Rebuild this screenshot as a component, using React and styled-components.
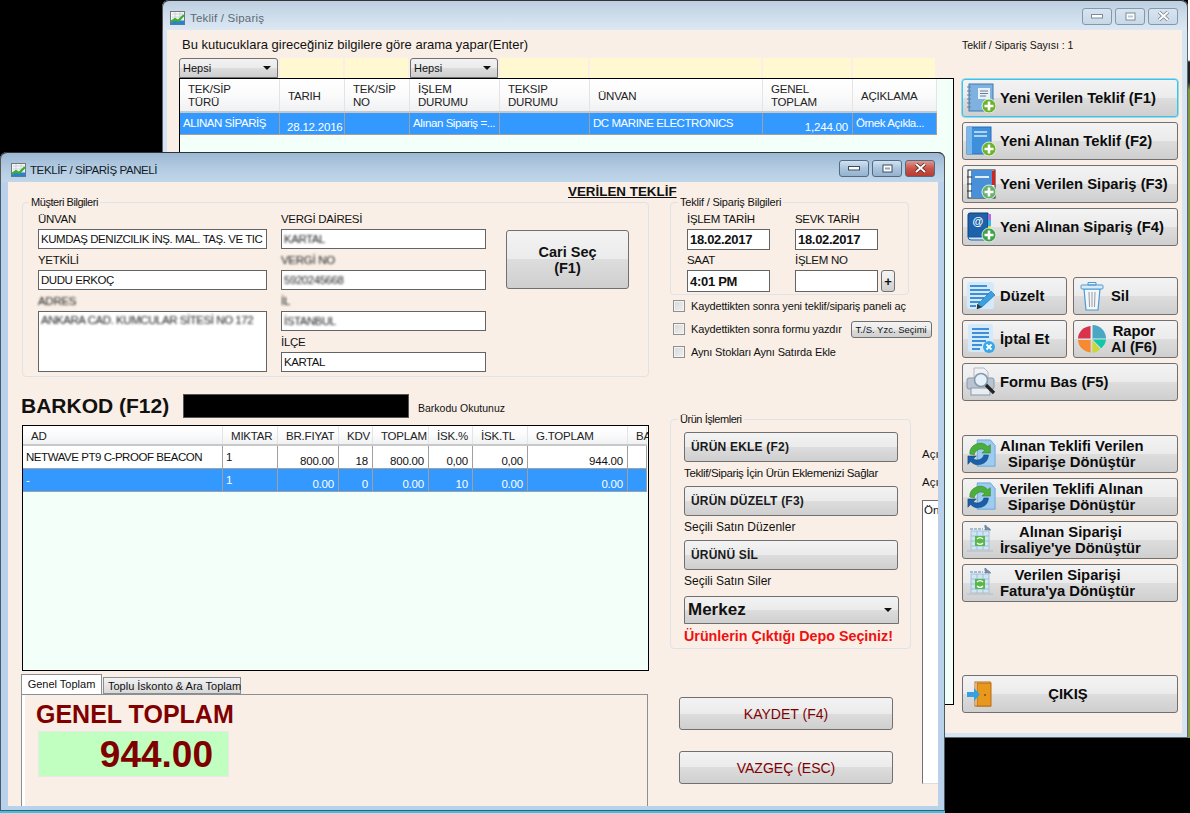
import React from 'react';
import styled, { createGlobalStyle } from 'styled-components';

const GlobalStyle = createGlobalStyle`
  html, body {
    margin: 0;
    padding: 0;
    background: #000;
  }
  * {
    box-sizing: border-box;
  }
`;

const BEIGE = '#f9efe6';
const MINT = '#f3fff9';
const SELECT = '#3399ff';
const MAROON = '#800000';

const Desktop = styled.div`
  position: relative;
  width: 1190px;
  height: 813px;
  overflow: hidden;
  background: #000;
  font-family: "Liberation Sans", Arial, sans-serif;
  font-size: 12px;
  color: #111;
`;

const EdgeStrip = styled.div`
  position: absolute;
  right: 0;
  top: 0;
  width: 2px;
  height: 738px;
  background: linear-gradient(#fff 0, #fff 60px, #222 62px, #222 82px, #7c9a3a 90px, #7c9a3a 100%);
`;

const Window = styled.div`
  position: absolute;
  left: ${(p) => p.$left}px;
  top: ${(p) => p.$top}px;
  width: ${(p) => p.$width}px;
  height: ${(p) => p.$height}px;
  display: flex;
  flex-direction: column;
  border-radius: 7px 7px 0 0;
  padding: 0 ${(p) => (p.$active ? 7 : 6)}px 5px ${(p) => (p.$active ? 8 : 5)}px;
  background: ${(p) => (p.$active ? '#b9d1ea' : '#d7e4f2')};
  box-shadow: inset 0 0 0 1px ${(p) => (p.$active ? '#4a5a66' : '#5a6670')};
  border-bottom: ${(p) => (p.$active ? '2px solid #2cc6e6' : '0')};
`;

const TitleBar = styled.div`
  flex: none;
  height: 30px;
  margin: 0 ${(p) => (p.$active ? -7 : -6)}px 0 ${(p) => (p.$active ? -8 : -5)}px;
  padding: ${(p) => (p.$active ? '5px 9px 0 10px' : '5px 9px 0 7px')};
  display: flex;
  align-items: center;
  gap: ${(p) => (p.$active ? 4 : 5)}px;
  border-radius: 7px 7px 0 0;
  border-top: 1px solid #333;
  border-left: 1px solid #555;
  border-right: 1px solid #555;
  background: ${(p) =>
    p.$active
      ? 'linear-gradient(#9cb8d4, #b4cce2 55%, #c0d6ea)'
      : 'linear-gradient(#bccfe0, #cfdeec 55%, #dce8f3)'};
  color: ${(p) => (p.$active ? '#101c28' : '#5d6b76')};
  font-size: 11.5px;
  letter-spacing: ${(p) => (p.$active ? -0.4 : 0.2)}px;
`;

const TitleText = styled.span`
  flex: 1;
`;

const WinControls = styled.div`
  display: flex;
  gap: 3px;
  margin-top: -4px;
`;

const WinBtn = styled.div`
  width: 30px;
  height: 17px;
  display: flex;
  align-items: center;
  justify-content: center;
  border: 1px solid ${(p) => (p.$active ? '#4f6b86' : '#8298ad')};
  border-radius: 3px;
  background: ${(p) =>
    p.$close && p.$active
      ? 'linear-gradient(#e0988c, #c9544a 50%, #b93a30)'
      : p.$active
      ? 'linear-gradient(#d3e2f0, #aac4dc 50%, #94b2cf)'
      : 'linear-gradient(#d8e4ef, #c8d8e8)'};
`;

const Client = styled.div`
  flex: 1;
  min-height: 0;
  position: relative;
  display: flex;
  overflow: hidden;
  background: ${BEIGE};
`;

/* back window */

const BackMain = styled.div`
  flex: none;
  width: 775px;
  margin-left: 12px;
  display: flex;
  flex-direction: column;
  padding-top: 7px;
`;

const HintText = styled.div`
  height: 21px;
  line-height: 15px;
  padding-left: 3px;
  font-size: 13px;
  color: #111;
`;

const FilterRow = styled.div`
  display: flex;
  gap: 2px;
  height: 20px;
`;

const FilterCell = styled.div`
  width: ${(p) => p.$w}px;
  background: #fff8d0;
`;

const Combo = styled.div`
  width: ${(p) => p.$w}px;
  height: ${(p) => p.$h || 20}px;
  margin-top: ${(p) => (p.$big ? 2 : 0)}px;
  display: flex;
  align-items: center;
  justify-content: space-between;
  padding: 0 6px 0 3px;
  border: 1px solid #707070;
  border-radius: 3px 3px 0 0;
  background: linear-gradient(#f2f2f2 0, #ebebeb 50%, #dddddd 50%, #cfcfcf 100%);
  font-size: ${(p) => (p.$big ? 17 : 11)}px;
  font-weight: ${(p) => (p.$big ? 700 : 400)};
  &::after {
    content: '';
    border-left: 4px solid transparent;
    border-right: 4px solid transparent;
    border-top: 4px solid #111;
  }
`;

const DataGrid = styled.div`
  height: ${(p) => p.$h}px;
  border: 1.5px solid #000;
  background: ${MINT};
  overflow: hidden;
`;

const GridRow = styled.div`
  display: grid;
  grid-template-columns: ${(p) => p.$cols};
  height: ${(p) => p.$h}px;
  width: max-content;
  background: ${(p) => (p.$selected ? SELECT : '#fff')};
  color: ${(p) => (p.$selected ? '#fff' : '#111')};
  border-bottom: 1px solid #a0a0a0;
`;

const HeaderRow = styled(GridRow)`
  background: linear-gradient(#fff 0, #fbfbfc 50%, #f0f1f2 100%);
  color: #222;
  border-bottom: 2px solid #c8c8c8;
`;

const HeadCell = styled.div`
  display: flex;
  align-items: center;
  padding: 2px 0 0 8px;
  line-height: 13px;
  font-size: 11.5px;
  letter-spacing: -0.2px;
  white-space: pre-line;
  border-right: 1px solid #e2e4e6;
`;

const Cell = styled.div`
  display: flex;
  align-items: ${(p) => (p.$low ? 'flex-end' : 'center')};
  justify-content: ${(p) => (p.$right ? 'flex-end' : 'flex-start')};
  padding: ${(p) => (p.$low ? '0 4px 1px 4px' : '0 4px 1px 3px')};
  font-size: 11.5px;
  letter-spacing: ${(p) => (p.$low ? -0.2 : -0.45)}px;
  white-space: nowrap;
  overflow: hidden;
  border-right: 1px solid #a0a0a0;
`;

const BackSide = styled.div`
  flex: none;
  width: 216px;
  margin-left: 8px;
  display: flex;
  flex-direction: column;
`;

const CountText = styled.div`
  height: 49px;
  padding-top: 9px;
  font-size: 10.5px;
`;

const Stack = styled.div`
  display: flex;
  flex-direction: column;
  gap: 5px;
  margin-top: ${(p) => p.$top || 0}px;
`;

const TwoUp = styled.div`
  display: flex;
  gap: 6px;
`;

const ActionBtn = styled.div`
  width: ${(p) => p.$w || 216}px;
  height: 38px;
  display: flex;
  align-items: center;
  padding-left: 3px;
  gap: 4px;
  border: 1px solid ${(p) => (p.$focus ? '#38c4ee' : '#707070')};
  box-shadow: ${(p) => (p.$focus ? '0 0 0 0.5px #38c4ee' : 'none')};
  border-radius: 3px;
  background: linear-gradient(#f3f3f3 0, #ebebeb 50%, #dddddd 50%, #cfcfcf 100%);
  font-size: 14.8px;
  font-weight: 700;
  line-height: 16px;
  color: #0c0c0c;
  svg {
    flex: none;
  }
`;

const BtnLabel = styled.span`
  white-space: nowrap;
  text-align: center;
  ${(p) => p.$wide && 'width: 136px;'}
`;

/* front window */

const FrontMain = styled.div`
  flex: none;
  width: 627px;
  margin-left: 14px;
  display: flex;
  flex-direction: column;
  padding-top: 14px;
`;

const Group = styled.fieldset`
  margin: 0;
  min-width: 0;
  border: 1px solid #dfe2e6;
  border-radius: 4px;
  padding: ${(p) => p.$pad};
  height: ${(p) => p.$h}px;
  ${(p) => p.$w && `width: ${p.$w}px;`}
`;

const GroupTitle = styled.legend`
  padding: 0 2px;
  margin-left: ${(p) => p.$shift}px;
  font-size: 11px;
  line-height: 13px;
  letter-spacing: ${(p) => p.$track ?? -0.45}px;
`;

const CustomerBody = styled.div`
  display: flex;
  align-items: flex-start;
`;

const FieldCol = styled.div`
  width: ${(p) => p.$w}px;
  margin-right: ${(p) => p.$gap}px;
  display: flex;
  flex-direction: column;
`;

const FieldLabel = styled.div`
  height: 20px;
  line-height: 21px;
  font-size: 11.5px;
  letter-spacing: -0.3px;
  ${(p) => p.$blur && 'filter: blur(1.2px); color: #222;'}
`;

const Field = styled.div`
  height: ${(p) => p.$h || 20}px;
  margin-bottom: 1px;
  padding: ${(p) => (p.$multi ? '2px 2px' : '0 2px')};
  display: flex;
  align-items: ${(p) => (p.$multi ? 'flex-start' : 'center')};
  background: #fff;
  border: 1px solid #646464;
  font-size: ${(p) => (p.$bold ? 13 : 11.5)}px;
  font-weight: ${(p) => (p.$bold ? 700 : 400)};
  letter-spacing: ${(p) => (p.$bold ? -0.3 : -0.45)}px;
  white-space: nowrap;
  overflow: hidden;
  width: ${(p) => (p.$w ? `${p.$w}px` : 'auto')};
`;

const BlurText = styled.span`
  filter: blur(1.2px);
  color: #222;
`;

const PlainBtn = styled.div`
  width: ${(p) => p.$w}px;
  height: ${(p) => p.$h}px;
  margin: ${(p) => p.$m || 0};
  display: flex;
  align-items: center;
  justify-content: ${(p) => (p.$left ? 'flex-start' : 'center')};
  padding-left: ${(p) => (p.$left ? 6 : 0)}px;
  text-align: center;
  border: 1px solid #707070;
  border-radius: 3px;
  background: linear-gradient(#f3f3f3 0, #ebebeb 50%, #dddddd 50%, #cfcfcf 100%);
  color: ${(p) => p.$color || '#111'};
  font-size: ${(p) => p.$size || 12}px;
  font-weight: ${(p) => (p.$bold ? 700 : 400)};
  letter-spacing: ${(p) => p.$track || 0}px;
`;

const BarcodeRow = styled.div`
  height: 24px;
  margin: 17px 0 7px -1px;
  display: flex;
  align-items: center;
`;

const BarcodeTitle = styled.div`
  width: 162px;
  font-size: 21px;
  font-weight: 700;
  color: #111;
`;

const BarcodeInput = styled.div`
  width: 226px;
  height: 24px;
  background: #000;
  border: 1px solid #555;
`;

const BarcodeHint = styled.div`
  margin-left: 9px;
  padding-top: 4px;
  font-size: 10.5px;
`;

const Tabs = styled.div`
  height: 20px;
  margin: 3px 0 0 -1px;
  display: flex;
  align-items: flex-end;
`;

const Tab = styled.div`
  height: ${(p) => (p.$active ? 20 : 17)}px;
  width: ${(p) => p.$w}px;
  display: flex;
  align-items: center;
  justify-content: center;
  padding: ${(p) => (p.$active ? '0 0 2px 0' : '0 0 0 5px')};
  font-size: 11px;
  white-space: nowrap;
  border: 1px solid #8a8f94;
  border-bottom: ${(p) => (p.$active ? '0' : '1px solid #8a8f94')};
  margin-right: ${(p) => (p.$active ? 1 : 0)}px;
  background: ${(p) => (p.$active ? '#fff' : 'linear-gradient(#f3f3f3, #d8d8d8)')};
`;

const TabPanel = styled.div`
  flex: 1;
  margin-left: -1px;
  margin-right: 1px;
  border: 1px solid #8a8f94;
  border-bottom: 0;
  box-shadow: inset 3px 0 0 #fff;
  padding: 6px 0 0 14px;
`;

const TotalTitle = styled.div`
  height: 30px;
  line-height: 26px;
  font-size: 25px;
  font-weight: 700;
  color: ${MAROON};
`;

const TotalBox = styled.div`
  width: 191px;
  height: 46px;
  margin-left: 2px;
  display: flex;
  align-items: center;
  justify-content: flex-end;
  padding: 1px 15px 0 0;
  background: #c0ffc0;
  border: 1px solid #e8e8e8;
  font-size: 37px;
  font-weight: 700;
  color: ${MAROON};
`;

const FrontSide = styled.div`
  flex: 1;
  min-width: 0;
  margin-left: 21px;
  display: flex;
  flex-direction: column;
  padding-top: 14px;
`;

const InfoGrid = styled.div`
  display: grid;
  grid-template-columns: 83px 83px;
  column-gap: 25px;
  align-items: start;
`;

const InfoField = styled.div`
  display: flex;
  flex-direction: column;
  position: relative;
  ${Field} {
    margin-bottom: 0;
    padding-left: 2px;
  }
`;

const AddBtn = styled(PlainBtn)`
  position: absolute;
  left: 86px;
  bottom: 0;
  font-weight: 700;
`;

const InfoLabel = styled.div`
  height: 20px;
  line-height: 20px;
  font-size: 11.5px;
  letter-spacing: -0.3px;
`;

const Checks = styled.div`
  margin: -1px 0 0 3px;
  display: flex;
  flex-direction: column;
`;

const CheckRow = styled.div`
  height: 23px;
  display: flex;
  align-items: center;
  font-size: 11px;
  white-space: nowrap;
  letter-spacing: -0.15px;
`;

const CheckBox = styled.span`
  width: 12px;
  height: 12px;
  margin-right: 6px;
  border: 1px solid #8e8f8f;
  background: linear-gradient(135deg, #d8d8d8, #f0f0f0);
  box-shadow: inset 0 0 0 1px #f4f4f4;
`;

const LowerRow = styled.div`
  display: flex;
  margin-top: 50px;
`;

const LowerCol = styled.div`
  flex: none;
  width: 241px;
  display: flex;
  flex-direction: column;
`;

const ActionList = styled.div`
  padding-top: 6px;
`;

const Caption = styled.div`
  height: 24px;
  line-height: 22px;
  font-size: ${(p) => (p.$tight ? 11.5 : 12)}px;
  letter-spacing: ${(p) => (p.$tight ? -0.36 : 0)}px;
  white-space: nowrap;
`;

const DepotWarn = styled.div`
  height: 22px;
  line-height: 24px;
  font-size: 14.3px;
  font-weight: 700;
  color: #f01010;
  white-space: nowrap;
`;

const NoteCol = styled.div`
  flex: none;
  margin-left: 11px;
  padding-top: 35px;
  display: flex;
  flex-direction: column;
`;

const NoteLabel = styled.div`
  height: 28px;
  font-size: 11.5px;
  white-space: nowrap;
`;

const NoteArea = styled.div`
  width: 80px;
  height: 284px;
  margin-top: -4px;
  padding: 3px 1px;
  background: #fff;
  border: 1px solid #707070;
  border-bottom-color: #ddd;
  font-size: 11.5px;
`;

const SaveCol = styled.div`
  margin: 48px 0 0 9px;
  display: flex;
  flex-direction: column;
  gap: 21px;
`;

const Heading = styled.div`
  position: absolute;
  left: 560px;
  top: 2px;
  font-size: 13.4px;
  font-weight: 700;
  text-decoration: underline;
  white-space: nowrap;
`;

/* drawings */

const Glyph = ({ view = 30, children }) => (
  <svg width={30} height={30} viewBox={`0 0 ${view} ${view}`}>
    {children}
  </svg>
);

const PlusBadge = ({ fill = '#6cb32a' }) => (
  <>
    <circle cx="23" cy="23" r="7" fill={fill} stroke="#fff" strokeWidth="0.8" />
    <path d="M23 18.5v9M18.5 23h9" stroke="#fff" strokeWidth="2.6" />
  </>
);

const SpiralBook = () => (
  <Glyph>
    <rect x="3" y="1" width="24" height="27" fill="#7fb2e0" stroke="#3f78b0" />
    <rect x="12" y="5" width="12" height="11" fill="#e8f1f8" />
    <path d="M14 8h8M14 10.5h8M14 13h6" stroke="#6b7f92" strokeWidth="1" />
    <path d="M1 4h4M1 8h4M1 12h4M1 16h4M1 20h4M1 24h4" stroke="#6b7f92" strokeWidth="1.2" />
    <PlusBadge />
  </Glyph>
);

const BlueBook = () => (
  <Glyph>
    <rect x="1" y="1" width="24" height="27" fill="#3e8fdc" stroke="#2a6fb4" />
    <rect x="1" y="1" width="5" height="27" fill="#7ab8ec" />
    <path d="M8 6h13M8 10h13" stroke="#d8eafa" strokeWidth="1.6" />
    <PlusBadge />
  </Glyph>
);

const TabBook = () => (
  <Glyph>
    <rect x="2" y="1" width="27" height="28" fill="#fff" stroke="#222" />
    <rect x="5" y="1" width="21" height="28" fill="#4a90d8" />
    <rect x="26" y="2" width="3" height="14" fill="#d8201c" />
    <path d="M9 8h14" stroke="#e0eefa" strokeWidth="2" />
    <path d="M1 8h5M1 15h5M1 22h5" stroke="#333" strokeWidth="1.2" />
    <PlusBadge fill="#66b36a" />
  </Glyph>
);

const AtBook = () => (
  <Glyph>
    <path d="M2 25V3q0-2 2-2h18v24z" fill="#1d63ab" stroke="#123e70" />
    <path d="M2 25q0 3 3 3h19v-3z" fill="#cfe2f2" stroke="#1d63ab" />
    <rect x="22" y="2" width="3" height="6" fill="#b06be0" />
    <rect x="22" y="8" width="3" height="6" fill="#38b8e8" />
    <rect x="22" y="14" width="3" height="6" fill="#e8d838" />
    <text x="6.5" y="13" fontSize="11" fontWeight="700" fill="#fff" fontFamily="Liberation Sans">@</text>
    <PlusBadge fill="#3fa34a" />
  </Glyph>
);

const EditDoc = () => (
  <Glyph>
    <rect x="1" y="1" width="27" height="27" rx="3" fill="#d4eafa" />
    <path d="M4 5h17M4 9h20M4 13h20M4 17h14M4 21h10M4 25h6" stroke="#3c8fd8" strokeWidth="1.8" />
    <path d="M25 10l4 4-13 12-5 2 1-5z" fill="#3aa0e0" stroke="#1f6aa8" strokeWidth="0.6" />
    <path d="M11 23l5 3-5 2z" fill="#333" />
  </Glyph>
);

const TrashCan = () => (
  <Glyph>
    <path d="M7 8h16l-2 21H9z" fill="#f2f7fb" stroke="#4a9ad4" strokeWidth="1.2" />
    <rect x="4" y="4" width="22" height="4" rx="1" fill="#dceaf5" stroke="#4a9ad4" />
    <path d="M11 1.5h8V4h-8z" fill="none" stroke="#4a9ad4" />
    <path d="M12 11l.5 15M15 11v15M18 11l-.5 15" stroke="#9a9a9a" strokeWidth="1" />
  </Glyph>
);

const CancelDoc = () => (
  <Glyph>
    <rect x="2" y="0" width="25" height="28" rx="3" fill="#d4eafa" />
    <path d="M6 5h17M6 9h17M6 13h17M6 17h14M6 21h10M6 25h8" stroke="#3c8fd8" strokeWidth="1.8" />
    <circle cx="23" cy="23" r="6" fill="#38a8e8" />
    <path d="M20.5 20.5l5 5M25.5 20.5l-5 5" stroke="#fff" strokeWidth="1.8" />
  </Glyph>
);

const PieChart = () => (
  <Glyph view={31}>
    <path d="M14 2a14 14 0 0 0-13 13h13z" fill="#d8324c" />
    <path d="M1 16.5a14 14 0 0 0 13 13v-13z" fill="#f58a32" />
    <path d="M16 1a14 14 0 0 1 14 14H16z" fill="#4aa8c4" />
    <path d="M16 16h14a14 14 0 0 1-5 9z" fill="#10c8a8" />
    <path d="M16 17l8 9a14 14 0 0 1-8 4z" fill="#c8d838" />
  </Glyph>
);

const PrinterLens = () => (
  <Glyph>
    <path d="M8 1h10l4 4v9H8z" fill="#eef2f6" stroke="#b0b8c0" />
    <rect x="1" y="11" width="27" height="11" rx="2" fill="#b8c4d2" stroke="#8c98a6" />
    <rect x="5" y="21" width="19" height="7" fill="#e8edf2" stroke="#8c98a6" />
    <circle cx="15" cy="13" r="6.5" fill="#e4f0fa" stroke="#8a98a8" strokeWidth="1.6" />
    <path d="M20 18l8 8" stroke="#222" strokeWidth="3.2" />
  </Glyph>
);

const ConvertArrows = () => (
  <Glyph view={32}>
    <path d="M12 1h14l5 6v22H12z" fill="#9ecbf0" stroke="#6aa4d8" />
    <path d="M4 16A11 11 0 0 1 23 8l3-2v9h-9l3-3A7 7 0 0 0 9 17z" fill="#4caf3c" stroke="#2b7a22" strokeWidth="0.5" />
    <path d="M24 17A11 11 0 0 1 5 24l-3 3v-9h9l-3 3a7 7 0 0 0 11-4z" fill="#1a5fa8" stroke="#0e3c70" strokeWidth="0.5" />
  </Glyph>
);

const SheetRefresh = () => (
  <Glyph>
    <path d="M4 4h13M19 0l6 5h-6z" stroke="#5a8ab8" fill="#888" strokeDasharray="3 1" />
    <rect x="5" y="6" width="18" height="19" fill="#cfe4f4" stroke="#a8c0d4" />
    <path d="M5 11h18M5 16h18M5 21h18M11 6v19M17 6v19" stroke="#9cc0dc" />
    <rect x="9" y="11" width="10" height="10" fill="#5ab848" />
    <path d="M11 14a4 4 0 0 1 6 0M17 18a4 4 0 0 1-6 0" stroke="#fff" strokeWidth="1.2" fill="none" />
    <path d="M1 26h26" stroke="#c4c8cc" strokeWidth="2" />
  </Glyph>
);

const ExitDoor = () => (
  <Glyph>
    <rect x="9" y="3" width="15" height="24" fill="#fff" stroke="#b86c10" />
    <rect x="11" y="4" width="14" height="23" fill="#e8981c" stroke="#b86c10" />
    <circle cx="19" cy="16" r="0.9" fill="#7a4a08" />
    <path d="M1 13h7V9l6 6.5L8 22v-4H1z" fill="#36a0e0" />
  </Glyph>
);

const AppIcon = () => (
  <svg width="15" height="14" viewBox="0 0 15 14">
    <rect x="0.5" y="0.5" width="14" height="13" fill="#f4f6f8" stroke="#777" />
    <path d="M2 3h11M2 6h11M2 9h11M5 1v12M10 1v12" stroke="#b8c4d0" strokeWidth="0.6" />
    <rect x="0.5" y="9.5" width="14" height="4" fill="#2e7fd0" />
    <path d="M1 11l4-3 3 2 6-6" stroke="#38b02c" strokeWidth="2.2" fill="none" />
  </svg>
);

const WindowControls = ({ active }) => (
  <WinControls>
    <WinBtn $active={active}>
      <svg width="12" height="6" viewBox="0 0 12 6">
        <rect x="0.5" y="1.5" width="11" height="3.5" fill="#fff" stroke={active ? '#3c4c5c' : '#7a8a98'} />
      </svg>
    </WinBtn>
    <WinBtn $active={active}>
      <svg width="11" height="9" viewBox="0 0 11 9">
        <rect x="1" y="1" width="9" height="7" fill="#fff" stroke={active ? '#3c4c5c' : '#7a8a98'} />
        <rect x="3" y="3.5" width="5" height="2" fill={active ? '#8aa6c2' : '#b8c8d8'} />
      </svg>
    </WinBtn>
    <WinBtn $active={active} $close>
      <svg width="13" height="10" viewBox="0 0 13 10">
        <path d="M2 1l9 8M11 1l-9 8" stroke={active ? '#4a1c18' : '#6a7a88'} strokeWidth="3.4" />
        <path d="M2 1l9 8M11 1l-9 8" stroke="#fff" strokeWidth="2" />
      </svg>
    </WinBtn>
  </WinControls>
);

/* data */

const backCols = '100px 65px 65px 90px 90px 173px 90px 84px';
const backHead = ['TEK/SİP\nTÜRÜ', 'TARIH', 'TEK/SİP\nNO', 'İŞLEM\nDURUMU', 'TEKSIP\nDURUMU', 'ÜNVAN', 'GENEL\nTOPLAM', 'AÇIKLAMA'];

const frontCols = '200px 55px 61px 34px 56px 44px 55px 100px 19px';
const frontHead = ['AD', 'MIKTAR', 'BR.FIYAT', 'KDV', 'TOPLAM', 'İSK.%', 'İSK.TL', 'G.TOPLAM', 'BA'];
const frontRows = [
  { name: 'NETWAVE PT9 C-PROOF BEACON', qty: '1', nums: ['800.00', '18', '800.00', '0,00', '0,00', '944.00'] },
  { name: '-', qty: '1', nums: ['0.00', '0', '0.00', '10', '0.00', '0.00'], selected: true },
];

const filterCells = [
  { combo: true, w: 99 },
  { w: 63 },
  { w: 63 },
  { combo: true, w: 88 },
  { w: 88 },
  { w: 171 },
  { w: 88 },
  { w: 82 },
];

const newButtons = [
  { label: 'Yeni Verilen Teklif (F1)', Icon: SpiralBook, focus: true },
  { label: 'Yeni Alınan Teklif (F2)', Icon: BlueBook },
  { label: 'Yeni Verilen Sipariş (F3)', Icon: TabBook },
  { label: 'Yeni Alınan Sipariş (F4)', Icon: AtBook },
];

const convertButtons = [
  { label: ['Alınan Teklifi Verilen', 'Siparişe Dönüştür'], Icon: ConvertArrows },
  { label: ['Verilen Teklifi Alınan', 'Siparişe Dönüştür'], Icon: ConvertArrows },
  { label: ['Alınan Siparişi', "İrsaliye'ye Dönüştür"], Icon: SheetRefresh },
  { label: ['Verilen Siparişi', "Fatura'ya Dönüştür"], Icon: SheetRefresh },
];

const checks = [
  'Kaydettikten sonra yeni teklif/sipariş paneli aç',
  'Kaydettikten sonra formu yazdır',
  'Aynı Stokları Aynı Satırda Ekle',
];

const productActions = [
  { label: 'ÜRÜN EKLE (F2)', note: 'Teklif/Sipariş İçin Ürün Eklemenizi Sağlar', tight: true },
  { label: 'ÜRÜN DÜZELT (F3)', note: 'Seçili Satın Düzenler' },
  { label: 'ÜRÜNÜ SİL', note: 'Seçili Satın Siler' },
];

const BackWindow = () => (
  <Window $left={162} $top={0} $width={1026} $height={738}>
    <TitleBar>
      <AppIcon />
      <TitleText>Teklif / Sipariş</TitleText>
      <WindowControls />
    </TitleBar>
    <Client>
      <BackMain>
        <HintText>Bu kutucuklara gireceğiniz bilgilere göre arama yapar(Enter)</HintText>
        <FilterRow>
          {filterCells.map((c, i) =>
            c.combo ? <Combo key={i} $w={c.w}>Hepsi</Combo> : <FilterCell key={i} $w={c.w} />
          )}
        </FilterRow>
        <DataGrid $h={627}>
          <HeaderRow $cols={backCols} $h={34}>
            {backHead.map((h) => <HeadCell key={h}>{h}</HeadCell>)}
          </HeaderRow>
          <GridRow $cols={backCols} $h={22} $selected>
            <Cell>ALINAN SİPARİŞ</Cell>
            <Cell $low>&nbsp;28.12.2016</Cell>
            <Cell />
            <Cell>Alınan Sipariş =...</Cell>
            <Cell />
            <Cell>DC MARINE ELECTRONICS</Cell>
            <Cell $low $right>1,244.00</Cell>
            <Cell>Örnek Açıkla...</Cell>
          </GridRow>
        </DataGrid>
      </BackMain>
      <BackSide>
        <CountText>Teklif / Sipariş Sayısı : 1</CountText>
        <Stack>
          {newButtons.map(({ label, Icon, focus }) => (
            <ActionBtn key={label} $focus={focus}>
              <Icon />
              <BtnLabel>{label}</BtnLabel>
            </ActionBtn>
          ))}
        </Stack>
        <Stack $top={31}>
          <TwoUp>
            <ActionBtn $w={105}><EditDoc /><BtnLabel>Düzelt</BtnLabel></ActionBtn>
            <ActionBtn $w={105}><TrashCan /><BtnLabel>Sil</BtnLabel></ActionBtn>
          </TwoUp>
          <TwoUp>
            <ActionBtn $w={105}><CancelDoc /><BtnLabel>İptal Et</BtnLabel></ActionBtn>
            <ActionBtn $w={105}><PieChart /><BtnLabel>Rapor<br />Al (F6)</BtnLabel></ActionBtn>
          </TwoUp>
          <ActionBtn><PrinterLens /><BtnLabel>Formu Bas (F5)</BtnLabel></ActionBtn>
        </Stack>
        <Stack $top={34}>
          {convertButtons.map(({ label, Icon }, i) => (
            <ActionBtn key={i}>
              <Icon />
              <BtnLabel>{label[0]}<br />{label[1]}</BtnLabel>
            </ActionBtn>
          ))}
        </Stack>
        <Stack $top={73}>
          <ActionBtn><ExitDoor /><BtnLabel $wide>ÇIKIŞ</BtnLabel></ActionBtn>
        </Stack>
      </BackSide>
    </Client>
  </Window>
);

const CustomerGroup = () => (
  <Group $h={181} $pad="0 0 0 15px">
    <GroupTitle $shift={-9}>Müşteri Bilgileri</GroupTitle>
    <CustomerBody>
      <FieldCol $w={229} $gap={14}>
        <FieldLabel>ÜNVAN</FieldLabel>
        <Field>KUMDAŞ DENIZCILIK İNŞ. MAL. TAŞ. VE TIC</Field>
        <FieldLabel>YETKİLİ</FieldLabel>
        <Field>DUDU ERKOÇ</Field>
        <FieldLabel $blur>ADRES</FieldLabel>
        <Field $h={61} $multi><BlurText>ANKARA CAD. KUMCULAR SİTESİ NO 172</BlurText></Field>
      </FieldCol>
      <FieldCol $w={205} $gap={20}>
        <FieldLabel>VERGİ DAİRESİ</FieldLabel>
        <Field><BlurText>KARTAL</BlurText></Field>
        <FieldLabel $blur>VERGİ NO</FieldLabel>
        <Field><BlurText>5920245668</BlurText></Field>
        <FieldLabel $blur>İL</FieldLabel>
        <Field><BlurText>İSTANBUL</BlurText></Field>
        <FieldLabel>İLÇE</FieldLabel>
        <Field>KARTAL</Field>
      </FieldCol>
      <PlainBtn $w={123} $h={59} $size={14.5} $bold $m="21px 0 0 0">Cari Seç<br />(F1)</PlainBtn>
    </CustomerBody>
  </Group>
);

const ItemGrid = () => (
  <DataGrid $h={246}>
    <HeaderRow $cols={frontCols} $h={20}>
      {frontHead.map((h) => <HeadCell key={h}>{h}</HeadCell>)}
    </HeaderRow>
    {frontRows.map((r) => (
      <GridRow key={r.name} $cols={frontCols} $h={23} $selected={r.selected}>
        <Cell>{r.name}</Cell>
        <Cell>{r.qty}</Cell>
        {r.nums.map((n, i) => <Cell key={i} $low $right>{n}</Cell>)}
        <Cell />
      </GridRow>
    ))}
  </DataGrid>
);

const FrontWindow = () => (
  <Window $left={0} $top={152} $width={945} $height={661} $active>
    <TitleBar $active>
      <AppIcon />
      <TitleText>TEKLİF / SİPARİŞ PANELİ</TitleText>
      <WindowControls active />
    </TitleBar>
    <Client>
      <Heading>VERİLEN TEKLİF</Heading>
      <FrontMain>
        <CustomerGroup />
        <BarcodeRow>
          <BarcodeTitle>BARKOD (F12)</BarcodeTitle>
          <BarcodeInput />
          <BarcodeHint>Barkodu Okutunuz</BarcodeHint>
        </BarcodeRow>
        <ItemGrid />
        <Tabs>
          <Tab $active $w={81}>Genel Toplam</Tab>
          <Tab $w={138}>Toplu İskonto &amp; Ara Toplam</Tab>
        </Tabs>
        <TabPanel>
          <TotalTitle>GENEL TOPLAM</TotalTitle>
          <TotalBox>944.00</TotalBox>
        </TabPanel>
      </FrontMain>
      <FrontSide>
        <Group $h={99} $w={239} $pad="0 0 0 16px">
          <GroupTitle $shift={-9} $track={-0.2}>Teklif / Sipariş Bilgileri</GroupTitle>
          <InfoGrid>
            <InfoField>
              <InfoLabel>İŞLEM TARİH</InfoLabel>
              <Field $h={21} $w={83} $bold>18.02.2017</Field>
            </InfoField>
            <InfoField>
              <InfoLabel>SEVK TARİH</InfoLabel>
              <Field $h={21} $w={83} $bold>18.02.2017</Field>
            </InfoField>
            <InfoField>
              <InfoLabel>SAAT</InfoLabel>
              <Field $h={22} $w={83} $bold>4:01 PM</Field>
            </InfoField>
            <InfoField>
              <InfoLabel>İŞLEM NO</InfoLabel>
              <Field $h={22} $w={83} />
              <AddBtn $w={14} $h={22} $size={13}>+</AddBtn>
            </InfoField>
          </InfoGrid>
        </Group>
        <Checks>
          {checks.map((c, i) => (
            <CheckRow key={c}>
              <CheckBox />
              {c}
              {i === 1 && <PlainBtn $w={81} $h={17} $size={9.5} $m="2px 0 0 9px">T./S. Yzc. Seçimi</PlainBtn>}
            </CheckRow>
          ))}
        </Checks>
        <LowerRow>
          <LowerCol>
            <Group $h={236} $pad="0 0 0 13px">
              <GroupTitle $shift={-6}>Ürün İşlemleri</GroupTitle>
              <ActionList>
                {productActions.map((a) => (
                  <React.Fragment key={a.label}>
                    <PlainBtn $w={214} $h={30} $left $bold $size={12} $track={0.2} $color="#1a1a1a">{a.label}</PlainBtn>
                    <Caption $tight={a.tight}>{a.note}</Caption>
                  </React.Fragment>
                ))}
                <Combo $w={215} $h={28} $big>Merkez</Combo>
                <DepotWarn>Ürünlerin Çıktığı Depo Seçiniz!</DepotWarn>
              </ActionList>
            </Group>
            <SaveCol>
              <PlainBtn $w={214} $h={33} $size={14} $color={MAROON}>KAYDET (F4)</PlainBtn>
              <PlainBtn $w={214} $h={33} $size={14} $color={MAROON}>VAZGEÇ (ESC)</PlainBtn>
            </SaveCol>
          </LowerCol>
          <NoteCol>
            <NoteLabel>Açı</NoteLabel>
            <NoteLabel>Açı</NoteLabel>
            <NoteArea>Ön</NoteArea>
          </NoteCol>
        </LowerRow>
      </FrontSide>
    </Client>
  </Window>
);

const App = () => (
  <Desktop>
    <GlobalStyle />
    <EdgeStrip />
    <BackWindow />
    <FrontWindow />
  </Desktop>
);

export default App;
